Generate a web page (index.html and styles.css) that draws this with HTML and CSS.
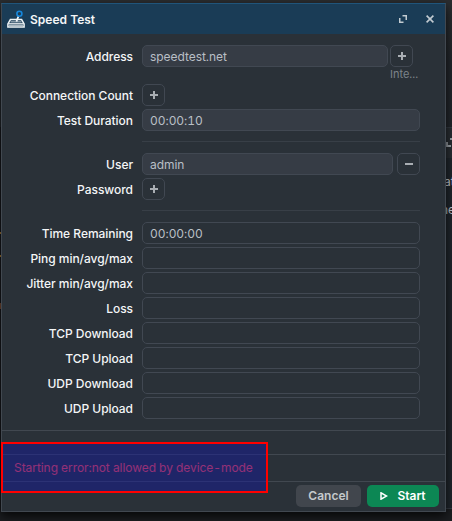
FILE: index.html
```html
<!DOCTYPE html>
<html lang="en">
<head>
<meta charset="utf-8">
<title>Speed Test</title>
<link rel="stylesheet" href="styles.css">
</head>
<body>
<div class="backdrop">
  <div class="edge-left"><i class="tick t1"></i><i class="tick t2"></i><i class="tick t3"></i></div>
  <div class="edge-right">
    <div class="edge-bar"><svg width="9" height="9" viewBox="0 0 9 9"><path d="M4 1h4v4M1 4v4h4" /></svg></div>
    <span class="peek p1">at</span>
    <span class="peek p2">ne</span>
  </div>
</div>
<main class="dialog">
  <header class="titlebar">
    <svg class="logo" width="18" height="18" viewBox="0 0 18 18">
      <path d="M3.4 9.6h11.2l2.5 4.4v2.9H.9V14z" fill="#1a3c56" stroke="#eef3f5" stroke-width="1.5"/>
      <path d="M3.5 11.8h11" stroke="#8fa2ae" stroke-width="1.4"/>
      <path d="M1.5 13.8h15" stroke="#eef3f5" stroke-width="1.3"/>
      <path d="M2 15.4h14" stroke="#b9c5cc" stroke-width="1"/>
      <path d="M11.7 5.6 9.4 11.6" stroke="#f4f7f8" stroke-width="1.7"/>
      <circle cx="12.4" cy="3.7" r="2.5" fill="#1a3c56" stroke="#1687dc" stroke-width="1.6"/>
    </svg>
    <h1>Speed Test</h1>
    <svg class="expand" width="8" height="8" viewBox="0 0 8 8"><path d="M3.5.75h3.75V5M.75 3v4.25H4.5"/></svg>
    <svg class="close" width="8" height="8" viewBox="0 0 8 8"><path d="m.6.6 6.8 6.8m0-6.8L.6 7.4"/></svg>
  </header>
  <section class="form">
    <div class="row address"><label>Address</label><div class="field filled">speedtest.net</div><div class="add"><button class="square"><i class="plus"></i></button><small>Inte...</small></div></div>
    <div class="row"><label>Connection Count</label><button class="square"><i class="plus"></i></button></div>
    <div class="row"><label>Test Duration</label><div class="field filled">00:00:10</div></div>
    <hr>
    <div class="row user"><label>User</label><div class="field filled">admin</div><button class="square"><i class="minus"></i></button></div>
    <div class="row"><label>Password</label><button class="square"><i class="plus"></i></button></div>
    <hr>
    <div class="row"><label>Time Remaining</label><div class="field">00:00:00</div></div>
    <div class="row"><label>Ping min/avg/max</label><div class="field"></div></div>
    <div class="row"><label>Jitter min/avg/max</label><div class="field"></div></div>
    <div class="row"><label>Loss</label><div class="field"></div></div>
    <div class="row"><label>TCP Download</label><div class="field"></div></div>
    <div class="row"><label>TCP Upload</label><div class="field"></div></div>
    <div class="row"><label>UDP Download</label><div class="field"></div></div>
    <div class="row"><label>UDP Upload</label><div class="field"></div></div>
  </section>
  <div class="spacer"></div>
  <div class="status">Starting error:not allowed by device-mode</div>
  <footer class="actions">
    <button class="btn cancel">Cancel</button>
    <button class="btn start"><svg width="8" height="8" viewBox="0 0 8 8"><path d="M1 .8v6.4L6.6 4z"/></svg>Start</button>
  </footer>
  <div class="highlight"></div>
</main>
</body>
</html>
```
FILE: styles.css
```css
* { box-sizing: border-box; }
body {
  margin: 0;
  width: 452px;
  height: 521px;
  overflow: hidden;
  position: relative;
  padding: 3px 0 0 1px;
  background: #24282c;
  font: 12px/16px Inter, "Liberation Sans", sans-serif;
  font-variant-numeric: tabular-nums;
  color: #f4f6f7;
}
.backdrop { position: absolute; inset: 0; background: linear-gradient(#2a2d30 0 12px, #23272c 60px, #20252b 500px, #1c1e21 509px); }
.edge-left { position: absolute; left: 0; top: 127px; width: 1px; height: 383px; background: #17191d; }
.tick { position: absolute; left: 0; width: 1px; height: 2px; background: #a97a35; }
.t1 { top: 105px; }
.t2 { top: 128px; }
.t3 { top: 176px; height: 6px; background: #7b4c35; }
.edge-right { position: absolute; left: 446px; right: 0; top: 127px; height: 382px; overflow: hidden; background: #20262d; border-top: 1px solid #343a42; border-bottom: 1px solid #343a42; }
.edge-bar { height: 30px; background: #292e33; }
.edge-bar svg { position: absolute; left: 0; top: 10px; fill: none; stroke: #a0a7ad; stroke-width: 1.8; }
.peek { position: absolute; font-size: 12px; color: #c3ccd5; }
.p1 { left: -2px; top: 46px; }
.p2 { left: -5px; top: 74px; }
.dialog {
  position: relative;
  width: 445px;
  height: 509px;
  display: flex;
  flex-direction: column;
  border: 1px solid #414850;
  border-top-color: #20557b;
  background: #2a3138;
  box-shadow: 0 4px 10px #000c;
}
.titlebar { height: 30px; flex: none; display: flex; align-items: center; padding: 0 11px 0 5px; background: #1a3c56; }
.logo { fill: none; margin-right: 5px; }
h1 { flex: 1; margin: 1px 0 0; font-size: 12px; line-height: 16px; font-weight: 600; }
.expand, .close { fill: none; stroke: #c2cbd1; stroke-width: 1.5; }
.expand { margin-right: 19px; }
.close { stroke-width: 1.6; }
.form { height: 396px; flex: none; padding: 11px 25px 0 0; display: flex; flex-direction: column; gap: 3px; }
.row { height: 22px; flex: none; display: flex; }
.row label { width: 131px; margin-right: 9px; line-height: 23px; text-align: right; font-weight: 500; letter-spacing: -.04px; white-space: nowrap; }
.address { height: 36px; }
.field { flex: 1; height: 22px; padding: 0 7px; border: 1px solid #414852; border-radius: 5px; line-height: 22px; letter-spacing: -.05px; color: #b9bfc5; }
.filled { background: #363c45; }
.add { width: 30px; margin: 0 0 0 2px; }
small { display: block; font-size: 11px; line-height: 14px; color: #7c838a; white-space: nowrap; }
.square { width: 23px; height: 22px; padding: 0; display: grid; place-items: center; border: 1px solid #414852; border-radius: 5px; background: none; }
.user .square { margin-left: 4px; }
.plus, .minus { width: 8px; height: 8px; background: linear-gradient(#a9aeb3, #a9aeb3) center / 8px 2px no-repeat; }
.plus { background: linear-gradient(#a9aeb3, #a9aeb3) center / 8px 2px no-repeat, linear-gradient(#a9aeb3, #a9aeb3) center / 2px 8px no-repeat; }
hr { width: 278px; height: 1px; flex: none; margin: 7px 0 8px 140px; border: 0; background: #383f47; }
.spacer { height: 24px; flex: none; border-top: 1px solid #414850; }
.status { height: 27px; flex: none; padding-left: 12px; border-top: 1px solid #414850; line-height: 26px; letter-spacing: -.06px; color: #ff4654; }
.actions { height: 30px; flex: none; padding: 3px 6px 0 0; display: flex; justify-content: flex-end; gap: 6px; border-top: 1px solid #414850; }
.btn { height: 22px; padding: 0; border: 0; border-radius: 5px; display: flex; align-items: center; justify-content: center; font: 600 12px/22px Inter, sans-serif; }
.cancel { width: 65px; background: #41464d; color: #c5c9cc; }
.start { width: 72px; gap: 9px; background: #0c8754; color: #fff; }
.start svg { fill: none; stroke: #fff; stroke-width: 1.5; }
.highlight { position: absolute; left: -1px; top: 438px; width: 267px; height: 51px; border: 2px solid #f00; background: rgb(20 24 162 / .46); }
```
